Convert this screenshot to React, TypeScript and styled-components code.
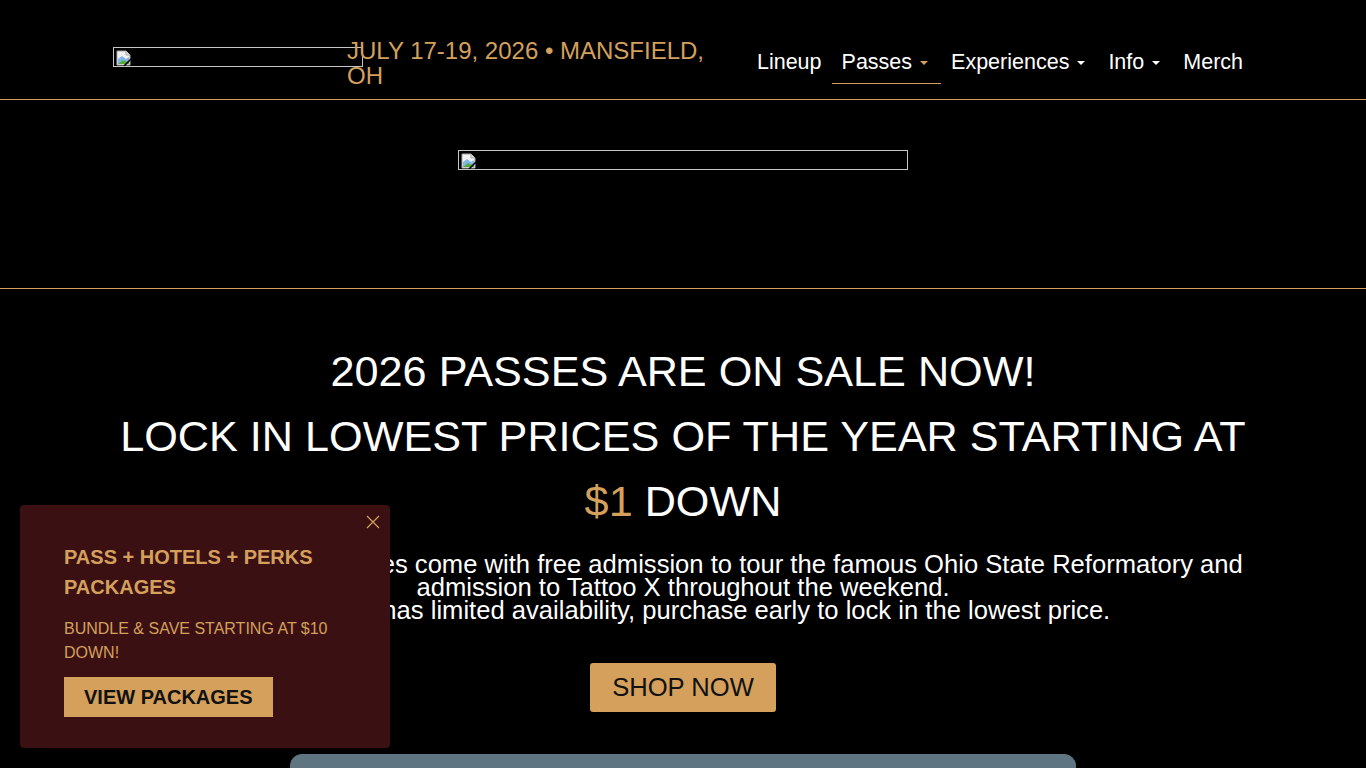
import styled, { createGlobalStyle } from "styled-components";

const gold = "#d4a05c";

const GlobalStyle = createGlobalStyle`
  html, body {
    margin: 0;
    padding: 0;
    background: #000;
    color: #fff;
    font-family: "Liberation Sans", Arial, sans-serif;
    overflow: hidden;
  }
  * {
    box-sizing: border-box;
  }
`;

const Page = styled.div`
  min-height: 768px;
  background: #000;
`;

const Header = styled.header`
  height: 100px;
  padding: 38px 113px 0;
  display: flex;
  align-items: flex-start;
  border-bottom: 1px solid ${gold};
`;

const LogoSlot = styled.div`
  width: 234px;
  flex-shrink: 0;
  padding-top: 9px;
`;

const Broken = styled.div<{ $w: number }>`
  width: ${(p) => p.$w}px;
  height: 20px;
  border: 1px solid #c6c6c6;
  padding: 2px 0 0 2px;
  display: flex;
  align-items: flex-start;
`;

const DateLine = styled.div`
  width: 372px;
  font-size: 24px;
  line-height: 25px;
  color: ${gold};
`;

const Nav = styled.nav`
  margin-left: auto;
  margin-top: 2px;
  display: flex;
`;

const NavItem = styled.div<{ $active?: boolean }>`
  display: flex;
  align-items: center;
  padding: 10px 10px 9px;
  font-size: 21.5px;
  line-height: 24px;
  color: #fff;
  border-bottom: 1px solid ${(p) => (p.$active ? gold : "transparent")};
`;

const Caret = styled.span<{ $gold?: boolean }>`
  margin: 2px 3px 0 8px;
  width: 0;
  height: 0;
  border-left: 4.5px solid transparent;
  border-right: 4.5px solid transparent;
  border-top: 4.5px solid ${(p) => (p.$gold ? gold : "#fff")};
`;

const Banner = styled.section`
  height: 189px;
  padding-top: 50px;
  display: flex;
  justify-content: center;
  border-bottom: 1px solid ${gold};
`;

const Main = styled.main`
  padding-top: 50px;
  display: flex;
  flex-direction: column;
  align-items: center;
`;

const Headline = styled.h1`
  margin: 0;
  max-width: 1140px;
  font-size: 43.2px;
  line-height: 65px;
  font-weight: 400;
  text-align: center;
  text-transform: uppercase;
`;

const Gold = styled.span`
  color: ${gold};
`;

const Copy = styled.p`
  margin: 19px 0 0;
  max-width: 1140px;
  font-size: 25.6px;
  line-height: 23px;
  text-align: center;
`;

const ShopButton = styled.a`
  margin-top: 41px;
  padding: 10px 22px;
  background: ${gold};
  color: #111;
  font-size: 25.6px;
  line-height: 29px;
  border-radius: 3px;
  text-decoration: none;
`;

const BottomPanel = styled.div`
  margin-top: 42px;
  width: 786px;
  height: 60px;
  background: #5f7682;
  border-radius: 12px 12px 0 0;
`;

const Popup = styled.aside`
  position: fixed;
  left: 20px;
  bottom: 20px;
  width: 370px;
  height: 243px;
  padding: 37px 44px 0;
  background: #3a1013;
  border-radius: 4px;
`;

const Close = styled.button`
  position: absolute;
  top: 10px;
  right: 10px;
  width: 14px;
  height: 14px;
  padding: 0;
  border: 0;
  background: none;
  display: flex;
`;

const PopupTitle = styled.h3`
  margin: 0;
  font-size: 20px;
  line-height: 30px;
  font-weight: 700;
  color: ${gold};
`;

const PopupText = styled.p`
  margin: 15px 0 0;
  font-size: 16px;
  line-height: 24px;
  color: ${gold};
`;

const PackagesButton = styled.a`
  display: inline-block;
  margin-top: 12px;
  padding: 8px 20px;
  background: ${gold};
  color: #111;
  font-size: 20px;
  line-height: 24px;
  font-weight: 700;
  text-decoration: none;
`;

function BrokenIcon() {
  return (
    <svg width="16" height="16" viewBox="0 0 16 16">
      <path d="M1 1h9l4 4v10H1z" fill="#f2f2f2" stroke="#a8a8a8" />
      <path d="M10 1v4h4" fill="#ddd" stroke="#a8a8a8" />
      <path d="M2 9l4-3 4 3 3-2v7H2z" fill="#7fb8e6" />
      <path d="M2 14l5-4 4 2 2-1v3H2z" fill="#5aa83c" />
      <path d="M8 16l7-7" stroke="#000" strokeWidth="1.6" />
    </svg>
  );
}

function BrokenImage({ width }: { width: number }) {
  return (
    <Broken $w={width}>
      <BrokenIcon />
    </Broken>
  );
}

const navLinks = [
  { label: "Lineup", menu: false },
  { label: "Passes", menu: true, active: true },
  { label: "Experiences", menu: true },
  { label: "Info", menu: true },
  { label: "Merch", menu: false },
];

function App() {
  return (
    <Page>
      <GlobalStyle />
      <Header>
        <LogoSlot>
          <BrokenImage width={250} />
        </LogoSlot>
        <DateLine>JULY 17-19, 2026 • MANSFIELD, OH</DateLine>
        <Nav>
          {navLinks.map((link) => (
            <NavItem key={link.label} $active={link.active}>
              {link.label}
              {link.menu && <Caret $gold={link.active} />}
            </NavItem>
          ))}
        </Nav>
      </Header>

      <Banner>
        <BrokenImage width={450} />
      </Banner>

      <Main>
        <Headline>
          2026 Passes are on sale now!
          <br />
          Lock in lowest prices of the year starting at <Gold>$1</Gold> down
        </Headline>
        <Copy>
          All Inkcarceration passes come with free admission to tour the famous
          Ohio State Reformatory and admission to Tattoo X throughout the
          weekend.
          <br />
          Each pass has limited availability, purchase early to lock in the
          lowest price.
        </Copy>
        <ShopButton href="#">SHOP NOW</ShopButton>
        <BottomPanel />
      </Main>

      <Popup>
        <Close aria-label="close">
          <svg width="14" height="14" viewBox="0 0 14 14">
            <path d="M1 1l12 12M13 1L1 13" stroke={gold} strokeWidth="1.2" />
          </svg>
        </Close>
        <PopupTitle>PASS + HOTELS + PERKS PACKAGES</PopupTitle>
        <PopupText>BUNDLE &amp; SAVE STARTING AT $10 DOWN!</PopupText>
        <PackagesButton href="#">VIEW PACKAGES</PackagesButton>
      </Popup>
    </Page>
  );
}

export default App;
